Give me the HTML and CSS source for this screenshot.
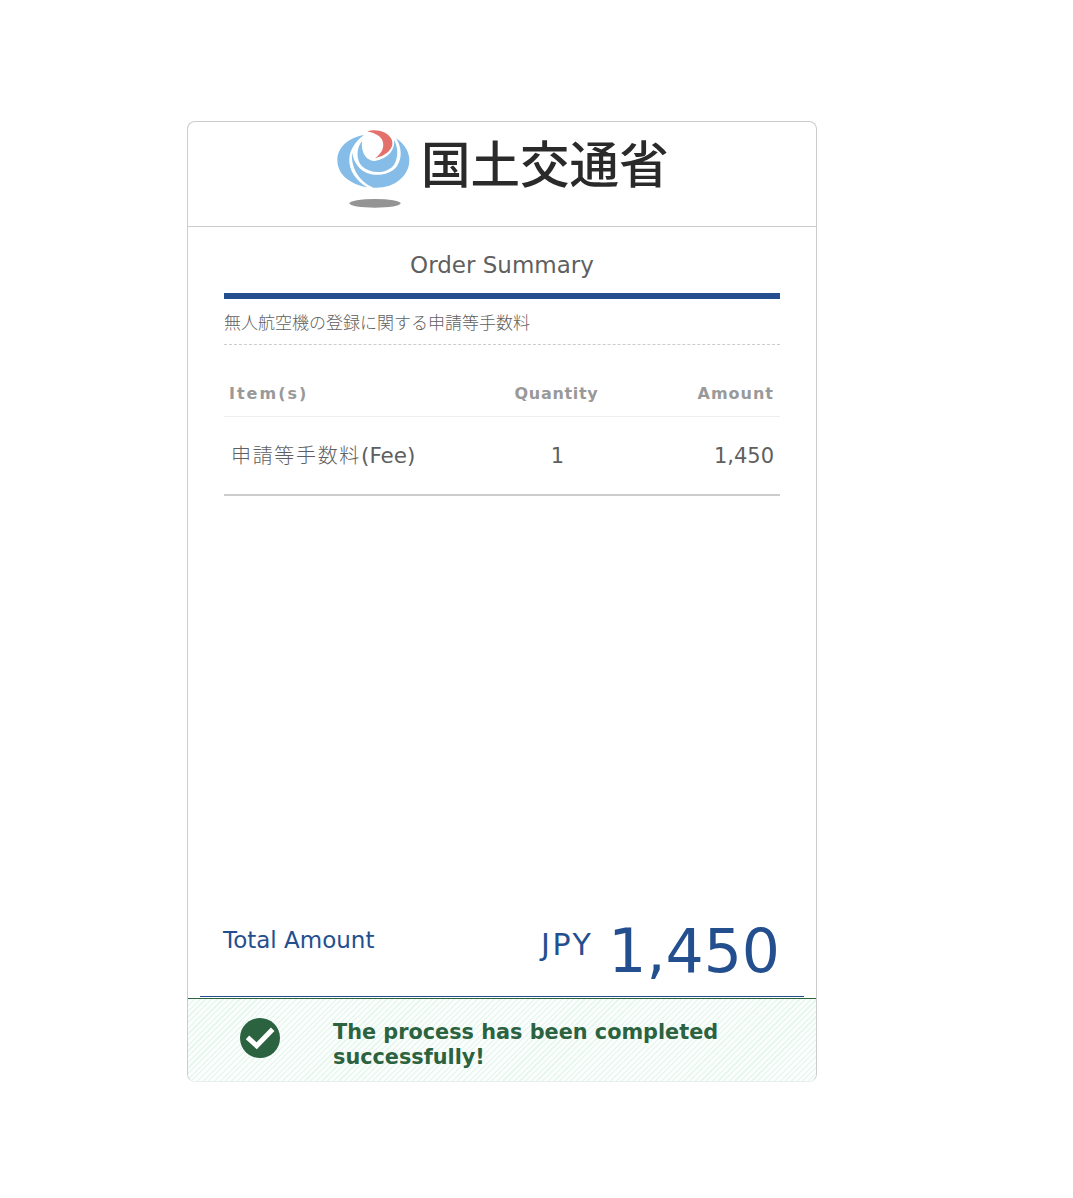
FILE: index.html
```html
<!DOCTYPE html>
<html lang="ja">
<head>
    <meta charset="UTF-8">
    <title>Order Summary</title>
    <link rel="stylesheet" href="styles.css">
</head>
<body>
    <div class="card">
        <div class="card-header">
            <svg class="emblem" width="90" height="85" viewBox="0 0 270 255">
                <path d="M102 30C55 38 22 68 22 105C22 150 62 178 112 187C78 168 55 135 58 100C60 72 78 48 102 30Z" fill="#85bde8"/>
                <path d="M66 82C62 125 85 170 130 188C190 192 238 155 238 105C238 82 225 58 198 40C215 65 218 100 200 125C175 155 115 160 85 125C74 112 68 97 66 82Z" fill="#85bde8"/>
                <path d="M96 48C78 70 78 105 96 124C124 150 176 146 194 116C206 94 204 66 192 45C196 75 175 100 135 108C110 108 92 85 96 48Z" fill="#85bde8"/>
                <path d="M112 20C135 10 170 18 183 40C197 65 175 90 135 100C160 82 165 60 155 42C148 30 130 22 112 20Z" fill="#e4706c"/>
                <ellipse cx="135" cy="235" rx="77" ry="13" fill="#949494"/>
            </svg>
            <span class="ministry">国土交通省</span>
        </div>
        <div class="card-body">
            <h2 class="summary-title">Order Summary</h2>
            <p class="summary-desc">無人航空機の登録に関する申請等手数料</p>
            <table class="items">
                <thead>
                    <tr>
                        <th class="col-item">Item(s)</th>
                        <th class="col-qty">Quantity</th>
                        <th class="col-amount">Amount</th>
                    </tr>
                </thead>
                <tbody>
                    <tr>
                        <td class="col-item"><span class="item-name">申請等手数料</span>(Fee)</td>
                        <td class="col-qty">1</td>
                        <td class="col-amount">1,450</td>
                    </tr>
                </tbody>
            </table>
        </div>
        <div class="total">
            <span class="total-label">Total Amount</span>
            <span class="total-value"><span class="currency">JPY</span><span class="price">1,450</span></span>
        </div>
        <div class="notice">
            <div class="notice-icon">
                <svg width="40" height="40" viewBox="0 0 40 40">
                    <circle cx="20" cy="20" r="20" fill="#2b6240"/>
                    <path d="M7.5 19.3L16.7 27.8L32.7 11.3" fill="none" stroke="#fff" stroke-width="5"/>
                </svg>
            </div>
            <p class="notice-text">The process has been completed successfully!</p>
        </div>
    </div>
</body>
</html>
```

FILE: styles.css
```css
body {
    margin: 0;
    background-color: #fff;
    font-family: "DejaVu Sans", "Noto Sans CJK JP", sans-serif;
    color: #5f5f5f;
}

.card {
    width: 630px;
    height: 961px;
    margin: 121px 0 116px 187px;
    box-sizing: border-box;
    display: flex;
    flex-direction: column;
    border: 1px solid #ccc;
    border-bottom-color: #e6efe9;
    border-radius: 8px;
}

.card-header {
    height: 105px;
    flex: none;
    box-sizing: border-box;
    display: flex;
    align-items: flex-start;
    padding: 3px 0 0 142px;
    border-bottom: 1px solid #ccc;
}

.ministry {
    margin: 2px 0 0 1px;
    font-family: "Noto Sans CJK JP", sans-serif;
    font-size: 49.5px;
    font-weight: 500;
    line-height: 70px;
    color: #2a2a2a;
}

.card-body {
    flex: 1;
    padding: 0 36px;
}

.summary-title {
    margin: 0;
    height: 72px;
    box-sizing: border-box;
    padding-top: 23px;
    font-size: 23px;
    line-height: 30px;
    font-weight: normal;
    text-align: center;
    border-bottom: 6px solid #244f8f;
}

.summary-desc {
    margin: 0;
    height: 46px;
    box-sizing: border-box;
    padding-top: 12px;
    font-family: "Noto Sans CJK JP", sans-serif;
    font-size: 17px;
    font-weight: 300;
    line-height: 22px;
    border-bottom: 1px dashed #ccc;
}

.items {
    width: 100%;
    margin-top: 24px;
    border-collapse: collapse;
    table-layout: fixed;
}

.items th {
    height: 47px;
    padding: 2px 6px 0 5px;
    box-sizing: border-box;
    font-size: 16px;
    letter-spacing: 0.7px;
    color: #999;
    border-bottom: 1px solid #eee;
}

.items th.col-item {
    letter-spacing: 2px;
}

.items th.col-amount {
    letter-spacing: 1px;
}

.items td {
    height: 79px;
    padding: 1px 6px 0 7px;
    box-sizing: border-box;
    font-size: 21px;
    line-height: 30px;
    border-bottom: 2px solid #ccc;
}

.items td.col-item {
    font-size: 21.5px;
}

.col-item {
    width: 260px;
    text-align: left;
}

.col-qty {
    width: 146px;
    text-align: center;
}

.col-amount {
    text-align: right;
}

.item-name {
    font-family: "Noto Sans CJK JP", sans-serif;
    font-weight: 300;
    font-size: 20px;
    line-height: 1;
    letter-spacing: 1.67px;
}

.total {
    flex: none;
    height: 87px;
    margin: 0 12px 1px;
    padding: 0 24px 0 23px;
    box-sizing: border-box;
    display: flex;
    justify-content: space-between;
    align-items: flex-start;
    color: #244f8f;
    border-bottom: 1px solid #244f8f;
}

.total-label {
    margin-top: 15px;
    font-size: 23px;
    line-height: 30px;
}

.total-value {
    display: flex;
    align-items: flex-start;
    white-space: nowrap;
}

.currency {
    margin: 17px 15px 0 0;
    font-size: 30px;
    line-height: 36px;
    letter-spacing: 2.5px;
}

.price {
    margin-top: 6px;
    font-size: 60px;
    line-height: 70px;
}

.notice {
    flex: none;
    height: 83px;
    box-sizing: border-box;
    display: flex;
    align-items: flex-start;
    padding: 19px 40px 0 52px;
    border-top: 1px solid #2b6240;
    border-radius: 0 0 8px 8px;
    background-color: #fff;
    background-image: repeating-linear-gradient(135deg, #e8f8f0 0, #e8f8f0 1.5px, #fbfefc 1.5px, #fbfefc 4px);
}

.notice-icon {
    width: 40px;
    height: 40px;
    flex: none;
}

.notice-text {
    margin: 2px 0 0 53px;
    font-size: 20.8px;
    line-height: 25px;
    font-weight: bold;
    color: #2b6240;
}
```
